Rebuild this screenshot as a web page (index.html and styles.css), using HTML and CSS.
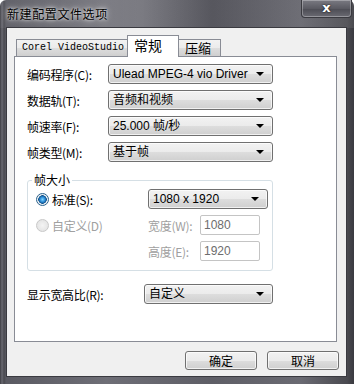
FILE: index.html
```html
<!DOCTYPE html>
<html lang="zh">
<head>
<meta charset="utf-8">
<title>新建配置文件选项</title>
<link rel="stylesheet" href="styles.css">
</head>
<body>
<div class="window">
  <div class="titlebar">
    <div class="title">新建配置文件选项</div>
    <div class="close"><span>x</span></div>
  </div>
  <div class="client">
    <div class="tabs">
      <div class="tab tab-mono">Corel VideoStudio</div>
      <div class="tab tab-active">常规</div>
      <div class="tab">压缩</div>
    </div>
    <div class="panel">
      <div class="rows">
        <div class="row"><span class="label">编码程序(C):</span><div class="combo w165"><span>Ulead MPEG-4 vio Driver</span><i class="arrow"></i></div></div>
        <div class="row"><span class="label">数据轨(T):</span><div class="combo w165"><span>音频和视频</span><i class="arrow"></i></div></div>
        <div class="row"><span class="label">帧速率(F):</span><div class="combo w165"><span>25.000 帧/秒</span><i class="arrow"></i></div></div>
        <div class="row"><span class="label">帧类型(M):</span><div class="combo w165"><span>基于帧</span><i class="arrow"></i></div></div>
      </div>
      <div class="group">
        <div class="legend">帧大小</div>
        <div class="grow">
          <span class="radio on"></span><span class="rlabel">标准(S):</span>
          <div class="combo w120"><span>1080 x 1920</span><i class="arrow"></i></div>
        </div>
        <div class="grow">
          <span class="radio off"></span><span class="rlabel dis">自定义(D)</span>
          <span class="dlabel dis">宽度(W):</span><div class="input">1080</div>
        </div>
        <div class="grow">
          <span class="rspace"></span><span class="rlabel"></span>
          <span class="dlabel dis">高度(E):</span><div class="input">1920</div>
        </div>
      </div>
      <div class="row aspect"><span class="label wide">显示宽高比(R):</span><div class="combo w129"><span>自定义</span><i class="arrow"></i></div></div>
    </div>
    <div class="buttons">
      <div class="btn">确定</div>
      <div class="btn">取消</div>
    </div>
  </div>
</div>
</body>
</html>
```
FILE: styles.css
```css
html, body {
  margin: 0;
  padding: 0;
}
body {
  width: 354px;
  height: 384px;
  overflow: hidden;
  font-family: "Liberation Sans", "Noto Sans CJK SC", sans-serif;
  font-size: 12px;
  color: #000;
}
.window {
  width: 354px;
  height: 384px;
  box-sizing: border-box;
  background: linear-gradient(90deg, #3c3c42 0px, #6a6a72 2px, #4a4a50 4px, #5a5a62 6px, #6e6e76 30%, #5e5e66 60%, #6a6a72 85%, #4a4a50 98%, #3a3a40 100%);
  display: flex;
  flex-direction: column;
  border-radius: 6px 6px 0 0;
}
.titlebar {
  height: 28px;
  display: flex;
  align-items: flex-start;
  background: linear-gradient(90deg, rgba(255,255,255,0.05), rgba(255,255,255,0.12) 40%, rgba(0,0,0,0.08) 60%, rgba(255,255,255,0.08));
}
.title {
  padding: 6px 0 0 7px;
  font-family: "Noto Sans CJK SC", sans-serif;
  font-size: 12px;
  letter-spacing: 0.6px;
  line-height: 16px;
  color: #000;
  text-shadow: 0 0 6px rgba(255,255,255,0.9), 0 0 3px rgba(255,255,255,0.8);
}
.close {
  margin-left: auto;
  margin-right: 2px;
  width: 51px;
  height: 18px;
  box-sizing: border-box;
  border: 1px solid #3a3a40;
  border-top: none;
  border-radius: 0 0 4px 4px;
  background: linear-gradient(#7a7a82, #5a5a62 50%, #4c4c54 51%, #6a6a72);
  box-shadow: inset 0 0 0 1px rgba(255,255,255,0.3);
  display: flex;
  align-items: center;
  justify-content: center;
}
.close span {
  color: #fff;
  font-family: "DejaVu Sans", sans-serif;
  font-weight: bold;
  font-size: 13px;
  line-height: 14px;
  margin-top: -1px;
  text-shadow: 0 0 2px #000;
}
.client {
  margin: 0 8px 8px 7px;
  flex: 1;
  background: #f0f0f0;
  box-shadow: 0 0 0 1px #3a3a40;
  display: flex;
  flex-direction: column;
  padding-top: 7px;
}
.tabs {
  display: flex;
  align-items: flex-end;
  height: 21px;
  padding-left: 9px;
  position: relative;
  z-index: 1;
}
.tab {
  height: 17px;
  box-sizing: border-box;
  border: 1px solid #898c95;
  border-bottom: none;
  background: linear-gradient(#f2f2f2, #ebebeb 50%, #dddddd 51%, #cfcfcf);
  font-family: "Noto Sans CJK SC", sans-serif;
  font-size: 13px;
  line-height: 15px;
  padding: 0 0 0 6px;
  width: 43px;
  margin-left: -1px;
  white-space: nowrap;
  flex: none;
}
.tab-mono {
  width: 112px;
  margin-left: 0;
  font-family: "Liberation Mono", monospace;
  font-size: 10px;
  line-height: 16px;
  padding-left: 5px;
  overflow: hidden;
}
.tab-active {
  height: 22px;
  width: 52px;
  background: #fff;
  margin-bottom: -1px;
  padding-left: 6px;
  line-height: 18px;
  font-size: 14px;
  z-index: 2;
}
.panel {
  margin-left: 7px;
  width: 323px;
  height: 286px;
  box-sizing: border-box;
  border: 1px solid #898c95;
  background: #fff;
  padding: 7px 0 0 12px;
}
.rows {
  display: flex;
  flex-direction: column;
  gap: 6px;
}
.row {
  display: flex;
  align-items: center;
  height: 20px;
}
.label {
  width: 81px;
  font-family: "Noto Sans CJK SC", sans-serif;
  font-size: 12px;
  letter-spacing: -0.3px;
}
.label.wide {
  width: 117px;
}
.combo {
  height: 20px;
  box-sizing: border-box;
  border: 1px solid #707070;
  border-radius: 3px;
  background: linear-gradient(#f2f2f2, #ebebeb 50%, #dddddd 51%, #cfcfcf);
  box-shadow: inset 0 0 0 1px rgba(255,255,255,0.7);
  display: flex;
  align-items: center;
  padding-left: 4px;
  padding-right: 8px;
  font-family: "Liberation Sans", "Noto Sans CJK SC", sans-serif;
  font-size: 12px;
  line-height: 16px;
}
.combo span {
  flex: 1;
  white-space: nowrap;
  overflow: hidden;
}
.w165 { width: 165px; }
.w120 { width: 120px; }
.w129 { width: 129px; }
.arrow {
  width: 0;
  height: 0;
  border-left: 4px solid transparent;
  border-right: 4px solid transparent;
  border-top: 4px solid #000;
}
.group {
  position: relative;
  margin-top: 18px;
  width: 246px;
  height: 91px;
  box-sizing: border-box;
  border: 1px solid #d5dfe5;
  border-radius: 3px;
  padding-top: 8px;
  display: flex;
  flex-direction: column;
  gap: 6px;
}
.legend {
  position: absolute;
  top: -9px;
  left: 4px;
  padding: 0 2px;
  background: #fff;
  font-family: "Noto Sans CJK SC", sans-serif;
  font-size: 12px;
  line-height: 16px;
}
.grow {
  display: flex;
  align-items: center;
  height: 20px;
  padding-left: 8px;
}
.radio, .rspace {
  width: 13px;
  height: 13px;
  box-sizing: border-box;
  border-radius: 50%;
  flex: none;
}
.radio.on {
  border: 1px solid #2c628b;
  background: radial-gradient(circle, #7fd4ff 0, #2a8ad4 2.5px, #11508a 4px, #e8eef2 4.5px, #f4f6f8 6px);
}
.radio.off {
  border: 1px solid #c8c8c8;
  background: radial-gradient(circle, #f4f4f4 0, #e6e6e6 5px);
}
.rlabel {
  width: 96px;
  padding-left: 3px;
  font-family: "Noto Sans CJK SC", sans-serif;
  font-size: 12px;
  letter-spacing: -0.3px;
}
.dis {
  color: #a0a0a0;
}
.dlabel {
  width: 52px;
  font-family: "Noto Sans CJK SC", sans-serif;
  font-size: 12px;
  letter-spacing: -0.3px;
}
.input {
  width: 60px;
  height: 20px;
  box-sizing: border-box;
  border: 1px solid #c4c4c4;
  border-radius: 2px;
  background: #fff;
  color: #6d6d6d;
  padding-left: 3px;
  line-height: 18px;
  font-size: 12px;
}
.aspect {
  margin-top: 13px;
}
.buttons {
  display: flex;
  justify-content: flex-end;
  gap: 10px;
  margin-top: 9px;
  padding-right: 7px;
}
.btn {
  width: 72px;
  height: 19px;
  box-sizing: border-box;
  border: 1px solid #707070;
  border-radius: 3px;
  background: linear-gradient(#f2f2f2, #ebebeb 50%, #dddddd 51%, #cfcfcf);
  box-shadow: inset 0 0 0 1px rgba(255,255,255,0.7);
  text-align: center;
  font-family: "Noto Sans CJK SC", sans-serif;
  font-size: 12px;
  line-height: 17px;
}
```
